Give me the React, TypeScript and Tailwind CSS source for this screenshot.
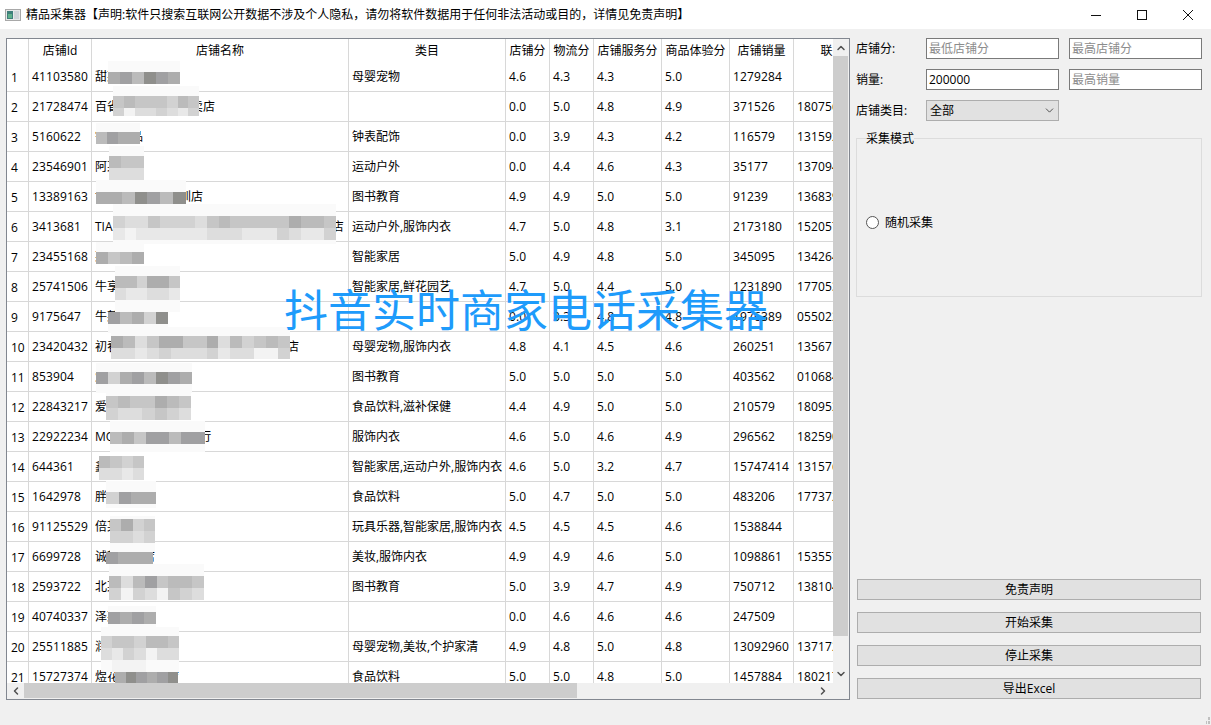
import React from 'react';
import { ChevronDown, ChevronLeft, ChevronRight, ChevronUp } from 'lucide-react';

const FONT = "font-['Open_Sans','Noto_Sans_CJK_SC',sans-serif]";

const columns = [
  { title: '店铺Id' },
  { title: '店铺名称' },
  { title: '类目' },
  { title: '店铺分' },
  { title: '物流分' },
  { title: '店铺服务分' },
  { title: '商品体验分' },
  { title: '店铺销量' },
  { title: '联系电话' },
];

const GRID = 'grid grid-cols-[22px_63px_257px_157px_44px_44px_68px_68px_64px_102px]';

// id, name, category, scores, sales, phone
const rows: string[][] = [
  ['41103580', '甜某某某', '母婴宠物', '4.6', '4.3', '4.3', '5.0', '1279284', ''],
  ['21728474', '百省某某某某某某卖店', '', '0.0', '5.0', '4.8', '4.9', '371526', '18075612034'],
  ['5160622', '钟某某品', '钟表配饰', '0.0', '3.9', '4.3', '4.2', '116579', '13159207716'],
  ['23546901', '阿某某', '运动户外', '0.0', '4.4', '4.6', '4.3', '35177', '13709452218'],
  ['13389163', '博某某某某某某圳店', '图书教育', '4.9', '4.9', '5.0', '5.0', '91239', '13683920147'],
  ['3413681', 'TIA 某某某某某某某某某某某某某某某某某某店', '运动户外,服饰内衣', '4.7', '5.0', '4.8', '3.1', '2173180', '15205718834'],
  ['23455168', '某某某某', '智能家居', '5.0', '4.9', '4.8', '5.0', '345095', '13426480915'],
  ['25741506', '牛享某某某', '智能家居,鲜花园艺', '4.7', '5.0', '4.4', '5.0', '1231890', '17705326641'],
  ['9175647', '牛某某某', '', '0.0', '3.3', '4.8', '4.8', '1976389', '05502217683'],
  ['23420432', '初春某某某某某某某某某某某某某某店', '母婴宠物,服饰内衣', '4.8', '4.1', '4.5', '4.6', '260251', '13567140982'],
  ['853904', '爱某某某', '图书教育', '5.0', '5.0', '5.0', '5.0', '403562', '01068420795'],
  ['22843217', '爱某某', '食品饮料,滋补保健', '4.4', '4.9', '5.0', '5.0', '210579', '18095263741'],
  ['22922234', 'MO某某某某某某某行', '服饰内衣', '4.6', '5.0', '4.6', '4.9', '296562', '18259037416'],
  ['644361', '鑫某某', '智能家居,运动户外,服饰内衣', '4.6', '5.0', '3.2', '4.7', '15747414', '13157682093'],
  ['1642978', '胖某某', '食品饮料', '5.0', '4.7', '5.0', '5.0', '483206', '17737215860'],
  ['91125529', '倍某某', '玩具乐器,智能家居,服饰内衣', '4.5', '4.5', '4.5', '4.6', '1538844', ''],
  ['6699728', '诚某某某店', '美妆,服饰内衣', '4.9', '4.9', '4.6', '5.0', '1098861', '15355740926'],
  ['2593722', '北某某某', '图书教育', '5.0', '3.9', '4.7', '4.9', '750712', '13810462957'],
  ['40740337', '泽某某', '', '0.0', '4.6', '4.6', '4.6', '247509', ''],
  ['25511885', '润某某', '母婴宠物,美妆,个护家清', '4.9', '4.8', '5.0', '4.8', '13092960', '13717284650'],
  ['15727374', '煜花某某某某店', '食品饮料', '5.0', '5.0', '4.8', '5.0', '1457884', '18021765394'],
];

// the name column is pixelated in the picture, one letter is one gray block
const shades: Record<string, string> = {
  a: 'bg-[#8f8f8c]',
  b: 'bg-[#a0a0a2]',
  c: 'bg-[#adadad]',
  d: 'bg-[#bbbbbb]',
  e: 'bg-[#c6c6c6]',
  f: 'bg-[#d2d2d2]',
  g: 'bg-[#dddddd]',
  h: 'bg-[#e8e8e8]',
  i: 'bg-[#f3f3f3]',
  j: 'bg-[#fafafa]',
};

const mosaics: { box: string; cells: string[] }[] = [
  { box: 'left-[101px] top-[22px] w-[72px] h-[23px] pt-[11px]', cells: ['cbdabc'] },
  { box: 'left-[106px] top-[47px] w-[86px] h-[30px] pt-[10px]', cells: ['edeeefde', 'figgfghf'] },
  { box: 'left-[89px] top-[84px] w-[44px] h-[21px] pt-[9px]', cells: ['dbcc'] },
  { box: 'left-[102px] top-[107px] w-[35px] h-[38px] pt-[10px]', cells: ['dee', 'ggg'] },
  { box: 'left-[89px] top-[141px] w-[90px] h-[24px] pt-[12px]', cells: ['ccdabda'] },
  { box: 'left-[106px] top-[165px] w-[223px] h-[40px] pt-[12px]', cells: ['fggefffgedeeeeecdde', 'hihhhhhhggghhhfghhf'] },
  { box: 'left-[89px] top-[203px] w-[48px] h-[22px] pt-[10px]', cells: ['cedc'] },
  { box: 'left-[108px] top-[227px] w-[65px] h-[46px] pt-[10px]', cells: ['ddfcce', 'ghhggh'] },
  { box: 'left-[101px] top-[273px] w-[60px] h-[21px]', cells: ['bdcfa'] },
  { box: 'left-[104px] top-[288px] w-[179px] h-[32px] pt-[9px]', cells: ['cdgecceecgdfede', 'gghgfgggfhggiif'] },
  { box: 'left-[89px] top-[324px] w-[96px] h-[30px] pt-[9px]', cells: ['bfcbdabc'] },
  { box: 'left-[99px] top-[354px] w-[85px] h-[27px] pt-[3px]', cells: ['edeecde', 'fggfefg'] },
  { box: 'left-[103px] top-[382px] w-[95px] h-[31px] pt-[11px]', cells: ['dcebbdbb'] },
  { box: 'left-[92px] top-[417px] w-[45px] h-[24px]', cells: ['defe', 'gghg'] },
  { box: 'left-[99px] top-[442px] w-[50px] h-[27px] pt-[11px]', cells: ['fbcc'] },
  { box: 'left-[103px] top-[477px] w-[45px] h-[36px] pt-[3px]', cells: ['ecfe', 'ffgf'] },
  { box: 'left-[99px] top-[513px] w-[47px] h-[12px]', cells: ['bccc'] },
  { box: 'left-[102px] top-[525px] w-[95px] h-[36px] pt-[12px]', cells: ['dgdbedde', 'fifgiefg'] },
  { box: 'left-[101px] top-[567px] w-[48px] h-[22px] pt-[6px]', cells: ['bcbc'] },
  { box: 'left-[94px] top-[588px] w-[78px] h-[45px] pt-[9px]', cells: ['feefdde', 'ghfgigg', 'jiiijjj'] },
  { box: 'left-[108px] top-[633px] w-[63px] h-[12px]', cells: ['cabcba'] },
];

const Cell: React.FC<{ children?: React.ReactNode; center?: boolean; numeric?: boolean }> = ({ children, center, numeric }) => (
  <div className={`h-full border-r border-[#d8d8d8] overflow-hidden whitespace-nowrap flex items-center ${center ? 'justify-center' : 'pl-[3px]'} ${numeric ? 'tracking-[0.15px]' : ''}`}>
    {children}
  </div>
);

const Table: React.FC = () => (
  <div className="w-[844px] h-[662px] border border-[#828790] bg-[#f0f0f0] flex flex-col shrink-0">
    <div className="flex h-[644px]">
      <div className="relative w-[826px] overflow-hidden bg-white">
        <div className={`${GRID} h-[23px]`}>
          <Cell />
          {columns.map((c) => (
            <Cell key={c.title} center>{c.title}</Cell>
          ))}
        </div>
        {rows.map((r, i) => (
          <div key={i} className={`${GRID} h-[30px] border-b border-[#d8d8d8]`}>
            <Cell><span className="pl-px pt-[2px]">{i + 1}</span></Cell>
            {r.map((v, j) => (
              <Cell key={j} numeric={j !== 1 && j !== 2}>{v}</Cell>
            ))}
          </div>
        ))}

        {mosaics.map((m) => (
          <div key={m.box} className={`absolute z-10 bg-[#fafafa] overflow-hidden ${m.box}`}>
            {m.cells.map((line, i) => (
              <div key={i} className="flex h-3">
                {line.split('').map((s, j) => (
                  <div key={j} className={`flex-1 ${shades[s]}`} />
                ))}
              </div>
            ))}
          </div>
        ))}

        <div className="absolute z-20 left-[277px] top-[248px] text-[44px] leading-[46px] font-normal text-[#1e9bfb] whitespace-nowrap">
          抖音实时商家电话采集器
        </div>
      </div>

      {/* vertical scroll bar */}
      <div className="w-4 flex flex-col">
        <div className="h-[17px] flex items-center justify-center text-[#505050]">
          <ChevronUp size={12} strokeWidth={3} />
        </div>
        <div className="h-[580px] w-[15px] bg-[#cdcdcd]" />
        <div className="flex-1 flex items-end justify-center pb-[3px] text-[#505050]">
          <ChevronDown size={12} strokeWidth={3} />
        </div>
      </div>
    </div>

    {/* horizontal scroll bar */}
    <div className="flex h-4">
      <div className="w-[17px] flex items-center justify-center text-[#505050]">
        <ChevronLeft size={12} strokeWidth={3} />
      </div>
      <div className="w-[553px] h-[15px] bg-[#cdcdcd]" />
      <div className="w-[256px] flex items-center justify-end pr-[4px] text-[#505050]">
        <ChevronRight size={12} strokeWidth={3} />
      </div>
    </div>
  </div>
);

const Field: React.FC<{ value?: string; placeholder?: string }> = ({ value, placeholder }) => (
  <div className={`w-[133px] h-[21px] border border-[#7a7a7a] bg-white flex items-center pl-[2px] ${value ? 'text-black' : 'text-[#8c8c8c]'}`}>
    {value || placeholder}
  </div>
);

const Label: React.FC<{ children: React.ReactNode }> = ({ children }) => (
  <div className="w-[70px] shrink-0">{children}</div>
);

const ActionButton: React.FC<{ children: React.ReactNode }> = ({ children }) => (
  <button className="w-[344px] ml-px h-[21px] border border-[#adadad] bg-[#e1e1e1] flex items-center justify-center">
    {children}
  </button>
);

const SidePanel: React.FC = () => (
  <div className="w-[346px] h-[662px] flex flex-col">
    <div className="flex items-center">
      <Label>店铺分:</Label>
      <div className="flex gap-[10px]">
        <Field placeholder="最低店铺分" />
        <Field placeholder="最高店铺分" />
      </div>
    </div>
    <div className="flex items-center mt-[10px]">
      <Label>销量:</Label>
      <div className="flex gap-[10px]">
        <Field value="200000" />
        <Field placeholder="最高销量" />
      </div>
    </div>
    <div className="flex items-center mt-[10px]">
      <Label>店铺类目:</Label>
      <div className="w-[133px] h-[21px] border border-[#adadad] bg-[#e1e1e1] flex items-center justify-between pl-[3px] pr-[2px]">
        全部
        <ChevronDown size={13} strokeWidth={1.5} className="text-[#303030]" />
      </div>
    </div>

    <div className="relative mt-[17px] h-[159px] border border-[#dcdcdc] flex items-center pl-[9px]">
      <div className="absolute left-[9px] top-[-8px] bg-[#f0f0f0] leading-[15px]">采集模式</div>
      <div className="flex items-center gap-[6px] mt-[10px]">
        <div className="w-[13px] h-[13px] rounded-full border border-[#555555] bg-white" />
        随机采集
      </div>
    </div>

    <div className="flex-1" />
    <div className="flex flex-col gap-3 mb-px">
      <ActionButton>免责声明</ActionButton>
      <ActionButton>开始采集</ActionButton>
      <ActionButton>停止采集</ActionButton>
      <ActionButton>导出Excel</ActionButton>
    </div>
  </div>
);

const WindowIcon: React.FC = () => (
  <svg width="16" height="14" viewBox="0 0 16 14" className="shrink-0">
    <rect x="0.5" y="1.5" width="15" height="11" fill="#e8e8e8" stroke="#a8a8a8" />
    <rect x="2" y="3" width="6" height="8" fill="#3f7f7a" />
    <rect x="3" y="6" width="4" height="4" fill="#5fb08a" />
    <rect x="9" y="3" width="5" height="8" fill="#d0d4d8" />
  </svg>
);

const TitleBar: React.FC = () => (
  <div className="h-[29px] bg-white flex items-center">
    <div className="pl-[5px] w-[26px]"><WindowIcon /></div>
    <div className="flex-1 whitespace-nowrap">
      精品采集器【声明:软件只搜索互联网公开数据不涉及个人隐私，请勿将软件数据用于任何非法活动或目的，详情见免责声明】
    </div>
    <div className="flex">
      <div className="w-[46px] h-[29px] flex items-center justify-center">
        <svg width="10" height="10" viewBox="0 0 10 10"><path d="M0 5.5H10" stroke="#111" fill="none" /></svg>
      </div>
      <div className="w-[46px] h-[29px] flex items-center justify-center">
        <svg width="10" height="10" viewBox="0 0 10 10"><rect x="0.5" y="0.5" width="9" height="9" stroke="#111" fill="none" /></svg>
      </div>
      <div className="w-[46px] h-[29px] flex items-center justify-center">
        <svg width="10" height="10" viewBox="0 0 10 10"><path d="M0 0L10 10M10 0L0 10" stroke="#111" fill="none" /></svg>
      </div>
    </div>
  </div>
);

export default function App() {
  return (
    <div className={`relative w-[1211px] h-[725px] overflow-hidden bg-[#f0f0f0] text-[12px] leading-none text-black ${FONT}`}>
      <TitleBar />
      <div className="flex gap-[6px] pl-[6px] pt-[9px]">
        <Table />
        <SidePanel />
      </div>
      {/* size grip */}
      <div className="absolute right-px bottom-px w-[7px] h-[7px] grid grid-cols-3 gap-px">
        <div />
        <div />
        <div className="bg-[#c0c0c0]" />
        <div />
        <div className="bg-[#c0c0c0]" />
        <div className="bg-[#c0c0c0]" />
      </div>
    </div>
  );
}
